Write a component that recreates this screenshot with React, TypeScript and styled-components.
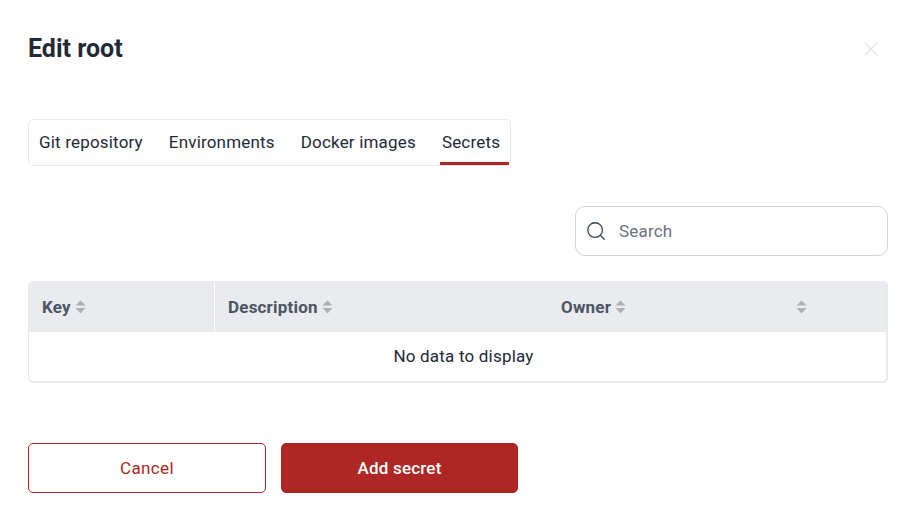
import React from 'react';
import styled, { createGlobalStyle } from 'styled-components';
import { Search as SearchIcon } from 'lucide-react';

const GlobalStyle = createGlobalStyle`
  html, body {
    margin: 0;
    padding: 0;
    background: #ffffff;
    font-family: Roboto, "Liberation Sans", sans-serif;
  }
  * {
    box-sizing: border-box;
  }
`;

const Dialog = styled.div`
  width: 916px;
  height: 519px;
  padding: 32px 28px 0;
  display: flex;
  flex-direction: column;
  overflow: hidden;
`;

const Header = styled.div`
  display: flex;
  justify-content: space-between;
  align-items: center;
  height: 34px;
`;

const Title = styled.h1`
  margin: 0;
  font-size: 25px;
  line-height: 34px;
  font-weight: 700;
  color: #1f2937;
`;

const CloseButton = styled.svg`
  width: 14px;
  height: 14px;
  margin-right: 10px;
  stroke: #dfe1e4;
  stroke-width: 1.1;
  fill: none;
`;

const TabBar = styled.div`
  display: flex;
  align-self: flex-start;
  gap: 15px;
  height: 47px;
  margin-top: 53px;
  padding: 0 1px 0 8px;
  border: 1px solid #e8e9ec;
  border-radius: 5px;
`;

const Tab = styled.div<{ $active?: boolean }>`
  display: flex;
  align-items: center;
  padding: 1px 9px 0 2px;
  font-size: 17px;
  letter-spacing: 0.18px;
  color: #1f2937;
  border-bottom: 3px solid ${(p) => (p.$active ? '#ae2724' : 'transparent')};
  white-space: nowrap;
`;

const SearchRow = styled.div`
  display: flex;
  justify-content: flex-end;
  margin-top: 40px;
`;

const SearchBox = styled.div`
  display: flex;
  align-items: center;
  width: 313px;
  height: 50px;
  padding-left: 9px;
  gap: 12px;
  border: 1px solid #d1d3d6;
  border-radius: 10px;
  color: #374151;
`;

const SearchText = styled.span`
  font-size: 17px;
  letter-spacing: 0.2px;
  color: #6b7280;
`;

const Table = styled.div`
  margin-top: 25px;
  height: 102px;
  border: 1px solid #e8e9ec;
  border-top: 1px solid #eaebef;
  border-right-width: 2px;
  border-bottom-width: 2px;
  border-radius: 5px;
  overflow: hidden;
`;

const HeaderRow = styled.div`
  display: grid;
  grid-template-columns: 186px 333px 231px 1fr;
  height: 50px;
  background: #eaebef;
`;

const HeaderCell = styled.div<{ $divided?: boolean }>`
  display: flex;
  align-items: center;
  padding-left: 13px;
  font-size: 17px;
  letter-spacing: 0.2px;
  font-weight: 700;
  color: #4b5563;
  border-right: ${(p) => (p.$divided ? '1px solid #ffffff' : 'none')};
`;

const SortGlyph = styled.svg`
  width: 11px;
  height: 14px;
  margin-left: 4px;
  fill: #adb0b7;
`;

const EmptyRow = styled.div`
  display: flex;
  justify-content: center;
  align-items: center;
  height: 49px;
  padding: 0 0 2px 12px;
  font-size: 17px;
  letter-spacing: 0.2px;
  color: #1f2937;
`;

const Footer = styled.div`
  display: flex;
  gap: 15px;
  margin-top: 60px;
`;

const Button = styled.div<{ $primary?: boolean }>`
  display: flex;
  justify-content: center;
  align-items: center;
  width: ${(p) => (p.$primary ? '237px' : '238px')};
  height: 50px;
  font-size: 17px;
  letter-spacing: ${(p) => (p.$primary ? '0.2px' : '0.4px')};
  font-weight: ${(p) => (p.$primary ? 500 : 400)};
  border: 1px solid #ae2724;
  border-radius: 5px;
  color: ${(p) => (p.$primary ? '#ffffff' : '#ae2724')};
  background: ${(p) => (p.$primary ? '#ae2724' : '#ffffff')};
`;

const SortIcon = () => (
  <SortGlyph viewBox="0 0 11 14">
    <path d="M5.5 0.5 L10.5 5.5 H0.5 Z" />
    <path d="M0.5 8 H10.5 L5.5 13.5 Z" />
  </SortGlyph>
);

const columns = ['Key', 'Description', 'Owner', ''];

export default function App() {
  return (
    <>
      <GlobalStyle />
      <Dialog>
        <Header>
          <Title>Edit root</Title>
          <CloseButton viewBox="0 0 14 14">
            <path d="M1 1 L13 13 M13 1 L1 13" />
          </CloseButton>
        </Header>
        <TabBar>
          <Tab>Git repository</Tab>
          <Tab>Environments</Tab>
          <Tab>Docker images</Tab>
          <Tab $active>Secrets</Tab>
        </TabBar>
        <SearchRow>
          <SearchBox>
            <SearchIcon size={22} strokeWidth={1.4} />
            <SearchText>Search</SearchText>
          </SearchBox>
        </SearchRow>
        <Table>
          <HeaderRow>
            {columns.map((name, i) => (
              <HeaderCell key={name || i} $divided={i === 0}>
                {name}
                <SortIcon />
              </HeaderCell>
            ))}
          </HeaderRow>
          <EmptyRow>No data to display</EmptyRow>
        </Table>
        <Footer>
          <Button>Cancel</Button>
          <Button $primary>Add secret</Button>
        </Footer>
      </Dialog>
    </>
  );
}
